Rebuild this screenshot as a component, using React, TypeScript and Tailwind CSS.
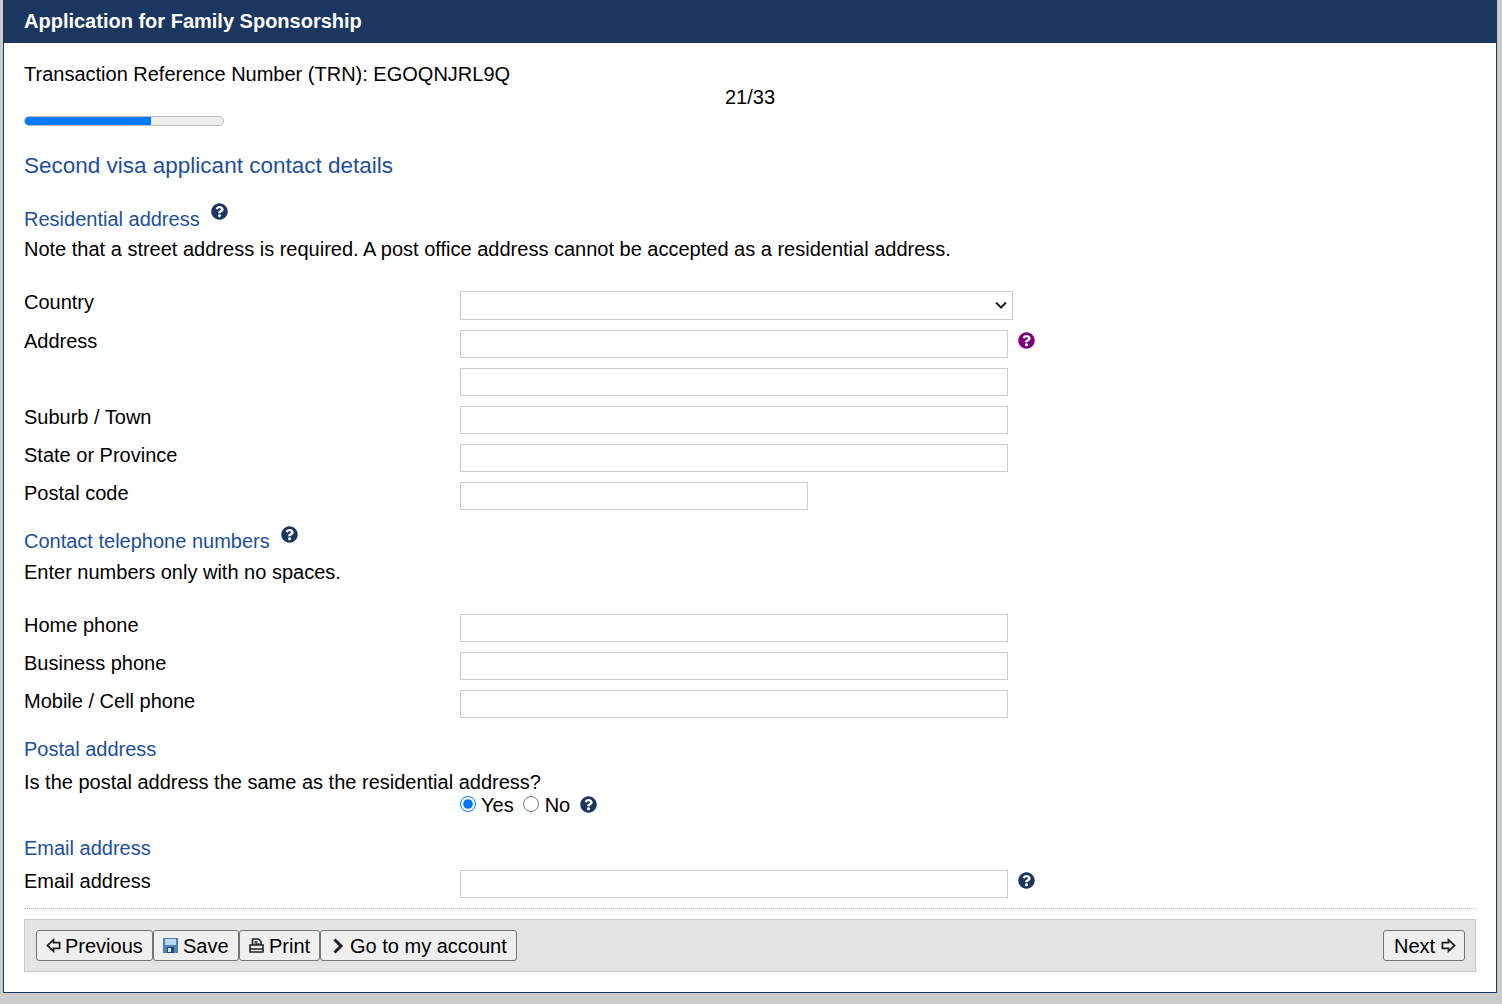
import { FaQuestionCircle } from "react-icons/fa";

const navy = "text-[#1b365f]";

function Help({ purple }: { purple?: boolean }) {
  return <FaQuestionCircle className={`w-[17px] h-[17px] ${purple ? "text-[#7a007a]" : navy}`} />;
}

function Row({ label, width = "w-[548px]", help }: { label?: string; width?: string; help?: boolean }) {
  return (
    <div className="flex mb-[10px] h-[28px]">
      <label className="w-[436px] leading-[23px]">{label}</label>
      <input type="text" className={`${width} h-[28px] border border-[#ccc] bg-white`} />
      {help && (
        <span className="ml-[10px] mt-[2px]">
          <Help purple={label === "Address"} />
        </span>
      )}
    </div>
  );
}

function SubHeading({ children, help = "" }: { children: string; help?: string }) {
  return (
    <div className="flex h-[23px] items-start">
      <h3 className="text-[#1c4f9c] leading-[23px]">{children}</h3>
      {help && (
        <span className={`ml-[11px] ${help}`}>
          <Help />
        </span>
      )}
    </div>
  );
}

function ToolButton({ children, className = "" }: { children: React.ReactNode; className?: string }) {
  return (
    <button className={`h-[31px] flex items-center bg-[#efefef] border border-[#767676] rounded-[3px] text-black ${className}`}>
      {children}
    </button>
  );
}

export default function App() {
  return (
    <div className="min-h-[1004px] bg-[#cccccc] pl-[3px] pr-[5px] text-[20px] text-black font-['Liberation_Sans',Arial,sans-serif]">
      <div className="h-[993px] bg-white border border-t-0 border-[#1b365f]">
        <div className="h-[43px] bg-[#1b365f] text-white font-bold px-5 leading-[43px]">
          Application for Family Sponsorship
        </div>
        <div className="px-5">
          <div className="pt-[20px] leading-[23px]">Transaction Reference Number (TRN): EGOQNJRL9Q</div>
          <div className="leading-[23px] text-center">21/33</div>
          <div className="mt-[7px] w-[200px] h-[10px] bg-[#eeeeee] border border-[#bbb] rounded-[5px] overflow-hidden">
            <div className="w-[125px] h-full bg-[#007bff] -m-px box-content border border-[#007bff]" />
          </div>
          <h2 className="mt-[25px] text-[22.5px] text-[#1c4f9c] leading-[30px]">Second visa applicant contact details</h2>

          <div className="mt-[27px]">
            <SubHeading help="-mt-[5px]">Residential address</SubHeading>
          </div>
          <p className="mt-[7px] leading-[23px]">
            Note that a street address is required. A post office address cannot be accepted as a residential address.
          </p>

          <div className="mt-[30px] flex mb-[10px] h-[29px]">
            <label className="w-[436px] leading-[23px]">Country</label>
            <div className="relative w-[553px] h-[29px]">
              <select className="w-full h-full border border-[#ccc] bg-white appearance-none" />
              <svg
                viewBox="0 0 12 8"
                className="absolute right-[6px] top-[10px] w-[12px] h-[8px] pointer-events-none"
                fill="none"
                stroke="#222"
                strokeWidth="2"
              >
                <path d="m1 1.5 5 5 5-5" />
              </svg>
            </div>
          </div>
          <Row label="Address" help />
          <Row />
          <Row label="Suburb / Town" />
          <Row label="State or Province" />
          <Row label="Postal code" width="w-[348px]" />

          <div className="mt-[20px]">
            <SubHeading help="-mt-[4px]">Contact telephone numbers</SubHeading>
          </div>
          <p className="mt-[8px] leading-[23px]">Enter numbers only with no spaces.</p>

          <div className="mt-[30px]">
            <Row label="Home phone" />
            <Row label="Business phone" />
            <Row label="Mobile / Cell phone" />
          </div>

          <div className="mt-[20px]">
            <SubHeading>Postal address</SubHeading>
          </div>
          <p className="mt-[10px] leading-[23px]">Is the postal address the same as the residential address?</p>
          <div className="ml-[436px] flex items-center h-[23px] -mt-px mb-px">
            <input type="radio" name="same" defaultChecked className="w-4 h-4 m-0 -mt-[2px]" />
            <span className="ml-[5px]">Yes</span>
            <input type="radio" name="same" className="w-4 h-4 m-0 ml-[9px] -mt-[2px]" />
            <span className="ml-[6px]">No</span>
            <span className="ml-[10px]">
              <Help />
            </span>
          </div>

          <div className="mt-[21px] mb-[10px]">
            <SubHeading>Email address</SubHeading>
          </div>
          <Row label="Email address" help />

          <div className="border-t border-dotted border-[#bbb]" />
          <div className="mt-[10px] h-[53px] bg-[#e4e4e4] border border-[#ccc] flex items-center justify-between pl-[11px] pr-[10px]">
            <div className="flex">
              <ToolButton className="w-[117px] pl-[9px]">
                <svg viewBox="0 0 16 16" className="w-[15px] h-[15px] mr-[4px]" fill="none" stroke="#222" strokeWidth="1.9">
                  <path d="M8 2 1.5 8 8 14v-3h6.5V5H8z" />
                </svg>
                Previous
              </ToolButton>
              <ToolButton className="w-[86px] pl-[9px]">
                <svg viewBox="0 0 15 15" className="w-[15px] h-[15px] mr-[5px]">
                  <path d="M0 0h15v15H0z" fill="#4f80b8" />
                  <path d="M2 1h11v6H2z" fill="#b9d8f2" />
                  <path d="M4 9h7v6H4z" fill="#24456f" />
                  <path d="M5 10h3v4H5z" fill="#d4e0ec" />
                </svg>
                Save
              </ToolButton>
              <ToolButton className="w-[81px] pl-[9px]">
                <svg viewBox="0 0 15 15" className="w-[15px] h-[15px] mr-[5px]" fill="none" stroke="#222" strokeWidth="1.6">
                  <path d="M3.5 7V1h6L12 3.5V7" />
                  <path d="M1 7h13v7H1z" />
                  <path d="M5.5 4h3M5.5 6h5M1 11h13" />
                </svg>
                Print
              </ToolButton>
              <ToolButton className="w-[197px] pl-[10px]">
                <svg viewBox="0 0 14 16" className="w-[14px] h-[16px] mr-[5px]" fill="none" stroke="#222" strokeWidth="3">
                  <path d="m3.5 1.5 6.5 6.5-6.5 6.5" />
                </svg>
                Go to my account
              </ToolButton>
            </div>
            <ToolButton className="w-[82px] pl-[10px]">
              Next
              <svg viewBox="0 0 16 16" className="w-[15px] h-[15px] ml-[6px]" fill="none" stroke="#222" strokeWidth="1.9">
                <path d="M8 2l6.5 6L8 14v-3H1.5V5H8z" />
              </svg>
            </ToolButton>
          </div>
        </div>
      </div>
    </div>
  );
}
